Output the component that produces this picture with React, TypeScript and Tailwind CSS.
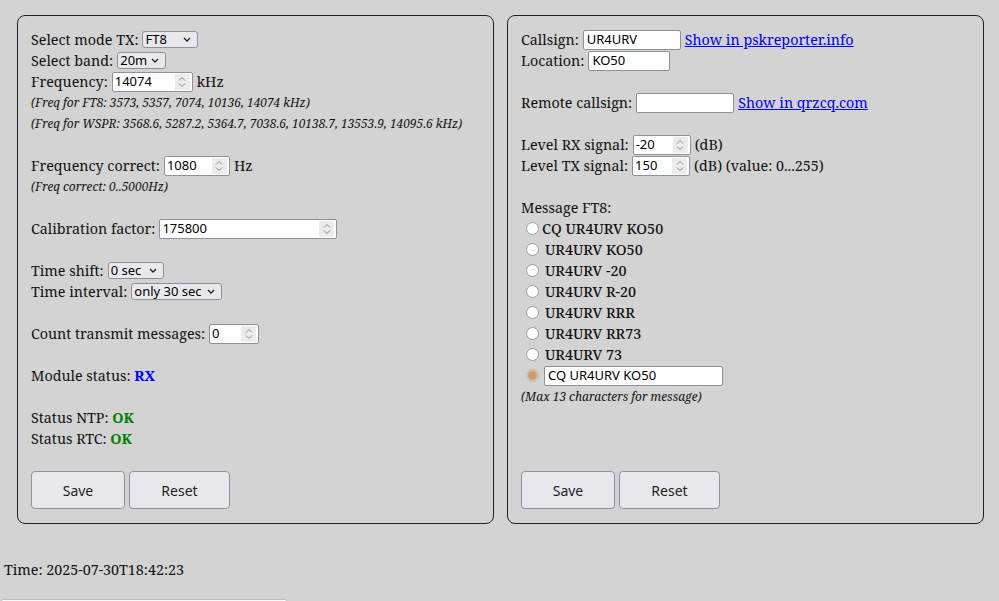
import React from 'react';

const serif = "font-['Noto_Serif','DejaVu_Serif',serif]";
const ui = "font-['Noto_Sans','Open_Sans',sans-serif]";

function Spin() {
    return (
        <span className="flex h-full w-[15px] flex-col items-center justify-center bg-[#ececec]">
            <svg width="8" height="12" viewBox="0 0 8 12" fill="none" stroke="#8a8a8a" strokeWidth="1">
                <path d="M1 4.5 L4 1.5 L7 4.5" />
                <path d="M1 7.5 L4 10.5 L7 7.5" />
            </svg>
        </span>
    );
}

function NumInput({ value, w }: { value: string; w: string }) {
    return (
        <span className={`ml-[4px] mr-[4px] inline-flex h-[20px] items-center justify-between rounded-[2px] border border-[#8f8f9d] bg-white pl-[2px] pr-[2px] text-[13px] leading-none text-black ${ui} ${w}`}>
            <span>{value}</span>
            <span className="h-[16px]"><Spin /></span>
        </span>
    );
}

function TextInput({ value, w }: { value: string; w: string }) {
    return (
        <span className={`ml-[4px] mr-[4px] inline-flex h-[20px] items-center rounded-[2px] border border-[#8f8f9d] bg-white px-[3px] text-[13px] leading-none text-black ${ui} ${w}`}>
            {value}
        </span>
    );
}

function Sel({ value, w }: { value: string; w: string }) {
    return (
        <span className={`ml-[4px] inline-flex h-[17px] items-center justify-between rounded-[3px] border border-[#8f8f9d] bg-[#e9e9ed] pl-[2px] pr-[6px] text-[13px] leading-none text-black ${ui} ${w}`}>
            <span>{value}</span>
            <svg width="8" height="5" viewBox="0 0 8 5" fill="none" stroke="#222" strokeWidth="1.3">
                <path d="M1 1 L4 4 L7 1" />
            </svg>
        </span>
    );
}

function Row({ children, className = '' }: { children?: React.ReactNode; className?: string }) {
    return <div className={`flex h-[21px] items-center whitespace-nowrap ${className}`}>{children}</div>;
}

function Note({ children }: { children: React.ReactNode }) {
    return <Row className="pt-[1px] text-[11.9px] italic">{children}</Row>;
}

function Buttons() {
    return (
        <div className={`mt-auto flex gap-[4px] ${ui} text-[14px] text-[#222]`}>
            <button className="h-[38px] w-[94px] rounded-[4px] border border-[#8f8f9d] bg-[#e9e9ed]">Save</button>
            <button className="h-[38px] w-[101px] rounded-[4px] border border-[#8f8f9d] bg-[#e9e9ed]">Reset</button>
        </div>
    );
}

function Radio({ checked = false }: { checked?: boolean }) {
    return checked ? (
        <span className="ml-[5px] mr-[1px] inline-flex h-[13px] w-[13px] items-center justify-center rounded-full border border-[#c9b39c] bg-[#dccab8]">
            <span className="h-[9px] w-[9px] rounded-full bg-[#c89f78]" />
        </span>
    ) : (
        <span className="ml-[5px] mr-[3px] inline-block h-[13px] w-[13px] rounded-full border border-[#9a9aa6] bg-white" />
    );
}

export default function App() {
    const msgs = ['UR4URV KO50', 'UR4URV -20', 'UR4URV R-20', 'UR4URV RRR', 'UR4URV RR73', 'UR4URV 73'];

    return (
        <div className={`min-h-screen bg-[#d3d3d3] text-[14.3px] text-[#111] ${serif}`}>
            <div className="flex gap-[13px] pl-[17px] pt-[15px]">

                {/* left panel — radio settings */}
                <div className="flex h-[509px] w-[477px] flex-col rounded-[8px] border border-[#222] px-[13px] pb-[14px] pt-[13px]">
                    <Row>Select mode TX:<Sel value="FT8" w="w-[56px]" /></Row>
                    <Row>Select band:<Sel value="20m" w="w-[49px]" /></Row>
                    <Row>Frequency:<NumInput value="14074" w="w-[81px]" />kHz</Row>
                    <Note>(Freq for FT8: 3573, 5357, 7074, 10136, 14074 kHz)</Note>
                    <Note>(Freq for WSPR: 3568.6, 5287.2, 5364.7, 7038.6, 10138.7, 13553.9, 14095.6 kHz)</Note>
                    <Row />
                    <Row>Frequency correct:<NumInput value="1080" w="w-[66px]" />Hz</Row>
                    <Note>(Freq correct: 0..5000Hz)</Note>
                    <Row />
                    <Row>Calibration factor:<NumInput value="175800" w="w-[178px]" /></Row>
                    <Row />
                    <Row>Time shift:<Sel value="0 sec" w="w-[56px]" /></Row>
                    <Row>Time interval:<Sel value="only 30 sec" w="w-[91px]" /></Row>
                    <Row />
                    <Row>Count transmit messages:<NumInput value="0" w="w-[50px]" /></Row>
                    <Row />
                    <Row>Module status:&nbsp;<b className="text-[#0000ff]">RX</b></Row>
                    <Row />
                    <Row>Status NTP:&nbsp;<b className="text-[#008000]">OK</b></Row>
                    <Row>Status RTC:&nbsp;<b className="text-[#008000]">OK</b></Row>
                    <Buttons />
                </div>

                {/* right panel — station and message */}
                <div className="flex h-[509px] w-[477px] flex-col rounded-[8px] border border-[#222] px-[13px] pb-[14px] pt-[13px]">
                    <Row>Callsign:<TextInput value="UR4URV" w="w-[98px]" /><a className="text-[#0000ee] underline">Show in pskreporter.info</a></Row>
                    <Row>Location:<TextInput value="KO50" w="w-[82px]" /></Row>
                    <Row />
                    <Row>Remote callsign:<TextInput value="" w="w-[98px]" /><a className="text-[#0000ee] underline">Show in qrzcq.com</a></Row>
                    <Row />
                    <Row>Level RX signal:<NumInput value="-20" w="w-[58px]" />(dB)</Row>
                    <Row>Level TX signal:<NumInput value="150" w="w-[58px]" />(dB) (value: 0...255)</Row>
                    <Row />
                    <Row>Message FT8:</Row>
                    <Row><Radio /><span className="font-medium">CQ UR4URV KO50</span></Row>
                    {msgs.map(m => (
                        <Row key={m}><Radio /><span className="ml-[3px] font-medium">{m}</span></Row>
                    ))}
                    <Row><Radio checked /><TextInput value="CQ UR4URV KO50" w="w-[179px]" /></Row>
                    <Note>(Max 13 characters for message)</Note>
                    <Buttons />
                </div>
            </div>

            <div className="mt-[35px] h-[21px] pl-[4px] leading-[21px]">Time: 2025-07-30T18:42:23</div>
            <div className="mt-[19px] h-[20px] w-[288px] rounded-[3px] border border-[#bbb] bg-[#f8f8f8]" />
        </div>
    );
}
